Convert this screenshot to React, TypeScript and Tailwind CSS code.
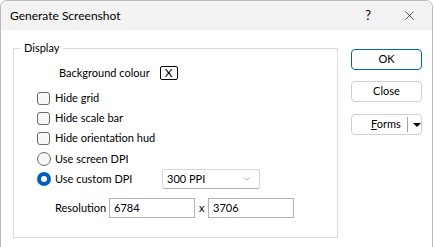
import React from "react";
import { ChevronDown, X } from "lucide-react";

function CheckRow({ label }: { label: string }) {
  return (
    <div className="flex h-[20px] items-center pl-[23px]">
      <span className="h-[13px] w-[13px] rounded-[3px] border border-[#6b6b6b] bg-[#f7f7f7]" />
      <span className="ml-[5px]">{label}</span>
    </div>
  );
}

function Radio({ checked }: { checked?: boolean }) {
  if (checked) {
    return (
      <span className="flex h-[14px] w-[14px] items-center justify-center rounded-full bg-[#005fb8]">
        <span className="h-[6px] w-[6px] rounded-full bg-white" />
      </span>
    );
  }
  return <span className="h-[14px] w-[14px] rounded-full border border-[#6b6b6b] bg-[#f7f7f7]" />;
}

export default function App() {
  return (
    <div className="h-[247px] w-[434px] overflow-hidden bg-white font-['Lato',sans-serif] text-[11px] text-black">
      <div className="h-[248px] w-[433px] rounded-t-[7px] border border-[#b9b9b9] bg-white">
        {/* Title bar */}
        <div className="flex h-[29px] items-center rounded-t-[7px] bg-[#f3f3f3] pl-[9px]">
          <span className="text-[12px]">Generate Screenshot</span>
          <span className="ml-auto mr-[31px] text-[13px]">?</span>
          <X size={15} strokeWidth={1} className="mr-[15px]" />
        </div>

        {/* Body */}
        <div className="flex pl-[12px] pt-[10px]">
          <fieldset className="h-[198px] w-[325px] border border-[#dcdcdc]">
            <legend className="ml-[6px] px-[4px] leading-[16px]">Display</legend>
            <div className="flex flex-col pt-[7px]">
              <div className="flex h-[20px] items-center pl-[45px]">
                <span>Background colour</span>
                <span className="ml-[10px] flex h-[14px] w-[18px] items-center justify-center rounded-[2px] border border-black text-[12px] leading-none">
                  X
                </span>
              </div>
              <div className="mt-[5px]">
                <CheckRow label="Hide grid" />
                <CheckRow label="Hide scale bar" />
                <CheckRow label="Hide orientation hud" />
              </div>
              <div className="mt-[1px] flex h-[20px] items-center pl-[23px]">
                <Radio />
                <span className="ml-[4px]">Use screen DPI</span>
              </div>
              <div className="flex h-[20px] items-center pl-[23px]">
                <div className="flex w-[125px] items-center">
                  <Radio checked />
                  <span className="ml-[4px]">Use custom DPI</span>
                </div>
                <div className="flex h-[20px] w-[98px] items-center rounded-[3px] border border-[#d6d6d6] border-b-[#b0b0b0] pl-[4px] pr-[7px]">
                  <span>300 PPI</span>
                  <ChevronDown size={10} strokeWidth={1.2} className="ml-auto text-[#5f5f5f]" />
                </div>
              </div>
              <div className="mt-[9px] flex h-[20px] items-center pl-[41px]">
                <span className="w-[54px]">Resolution</span>
                <div className="flex h-[20px] w-[86px] items-center border border-[#b4b4b4] pl-[4px]">6784</div>
                <span className="w-[13px] pl-[4px]">x</span>
                <div className="flex h-[20px] w-[86px] items-center border border-[#b4b4b4] pl-[4px]">3706</div>
              </div>
            </div>
          </fieldset>

          {/* Buttons */}
          <div className="ml-[13px] flex flex-col pt-[9px]">
            <button className="h-[21px] w-[71px] rounded-[4px] border border-[#0067c0] bg-white">OK</button>
            <button className="mt-[11px] h-[21px] w-[71px] rounded-[4px] border border-[#d0d0d0] bg-white">Close</button>
            <button className="mt-[12px] flex h-[21px] w-[71px] items-center rounded-[4px] border border-[#d0d0d0] bg-white">
              <span className="ml-[19px]">
                <span className="underline">F</span>orms
              </span>
              <span className="ml-[6px] h-[15px] w-px bg-[#a0a0a0]" />
              <span className="ml-[5px] h-0 w-0 border-x-[4px] border-t-[4px] border-x-transparent border-t-black" />
            </button>
          </div>
        </div>
      </div>
    </div>
  );
}
